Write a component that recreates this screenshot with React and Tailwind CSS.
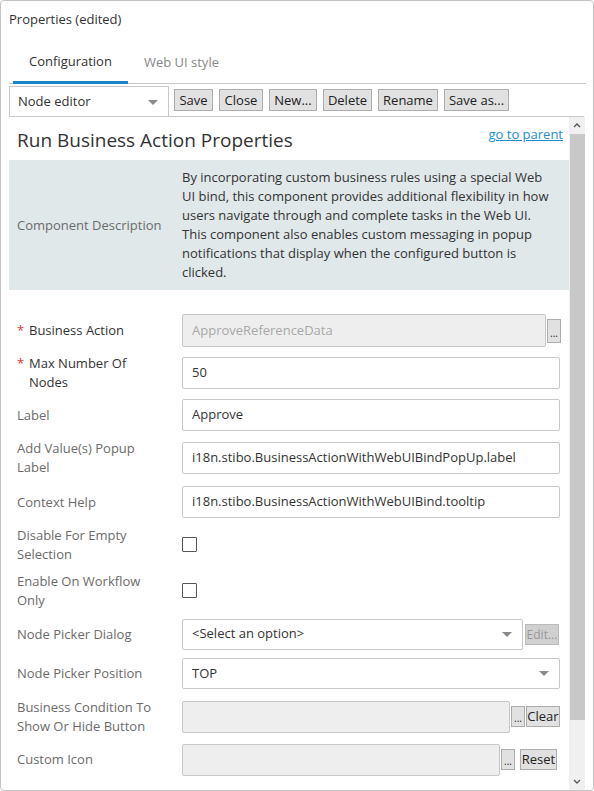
import React from "react";

const Btn = ({ children, className = "" }) => (
  <button className={`h-[22px] px-[3px] bg-[#e1e1e1] border border-[#adadad] text-[13px] leading-[20px] text-[#222] whitespace-nowrap ${className}`}>{children}</button>
);

const Small = ({ className = "" }) => (
  <div className={`w-[14px] h-[21px] bg-[#e1e1e1] border border-[#adadad] text-[10px] leading-[22px] text-center text-[#222] ${className}`}>...</div>
);

const Arrow = () => (
  <svg width="10" height="5" viewBox="0 0 10 5" className="shrink-0"><path d="M0 0 L10 0 L5 5 Z" fill="#8a8a8a" /></svg>
);

const Label = ({ children, req, dark, nowrap }) => (
  <div className={`w-[173px] shrink-0 pl-[8px] flex text-[13px] leading-[19px] ${nowrap ? "pr-[4px] whitespace-nowrap" : "pr-[22px]"} ${dark ? "text-[#333]" : "text-[#6b6b6b]"}`}>
    {req && <span className="text-[#d33] w-[12px] shrink-0">*</span>}
    <span>{children}</span>
  </div>
);

const Input = ({ value, disabled, className = "w-[378px]" }) => (
  <div className={`h-[32px] border border-[#c8c8c8] rounded-[2px] flex items-center px-[9px] text-[13px] ${disabled ? "bg-[#eeeeee] text-[#a8a8a8]" : "bg-white text-[#333]"} ${className}`}>{value}</div>
);

const Check = () => <div className="w-[15px] h-[15px] border-[1.5px] border-[#555] rounded-[1px] bg-white" />;

export default function App() {
  return (
    <div className="w-[594px] h-[791px] border border-[#c4c4c4] rounded-[4px] bg-white overflow-hidden flex flex-col font-['Open_Sans',sans-serif] text-[#333]">
      <div className="h-[39px] pl-[8px] pt-[9px] text-[13px] leading-[19px]">Properties (edited)</div>
      <div className="ml-[8px] mr-[7px] flex border-b border-[#c8c8c8] h-[44px] items-stretch">
        <div className="ml-[4px] px-[16px] flex items-center text-[13px] text-[#333] border-b-[3px] border-[#1a86c8] -mb-[1px] pt-[3px]">Configuration</div>
        <div className="px-[16px] flex items-center text-[13px] text-[#888] pt-[3px]">Web UI style</div>
      </div>
      <div className="ml-[8px] mr-[9px] mt-[2px] h-[31px] border-b border-[#c8c8c8] flex items-start">
        <div className="w-[160px] h-[31px] border border-[#c8c8c8] border-b-0 flex items-center justify-between pl-[8px] pr-[10px] text-[13px] text-[#333]">
          <span>Node editor</span>
          <Arrow />
        </div>
        <div className="flex gap-[6px] ml-[5px] mt-[3px]">
          <Btn className="w-[39px]">Save</Btn>
          <Btn className="w-[44px]">Close</Btn>
          <Btn className="w-[48px]">New...</Btn>
          <Btn className="w-[49px]">Delete</Btn>
          <Btn className="w-[60px]">Rename</Btn>
          <Btn className="w-[65px]">Save as...</Btn>
        </div>
      </div>
      <div className="flex flex-1 min-h-0 ml-[8px] mr-[8px]">
        <div className="flex-1 min-w-0 flex flex-col">
          <div className="h-[43px] flex items-center justify-between pl-[8px] pr-[6px]">
            <span className="text-[19px] text-[#333] mt-[3px]">Run Business Action Properties</span>
            <span className="text-[13px] text-[#1a8fd0] underline -mt-[8px]">go to parent</span>
          </div>
          <div className="h-[130px] bg-[#e0e8ea] flex items-center">
            <Label nowrap>Component Description</Label>
            <div className="text-[13px] leading-[19px] text-[#333] whitespace-nowrap">
              <div>By incorporating custom business rules using a special Web</div>
              <div>UI bind, this component provides additional flexibility in how</div>
              <div>users navigate through and complete tasks in the Web UI.</div>
              <div>This component also enables custom messaging in popup</div>
              <div>notifications that display when the configured button is</div>
              <div>clicked.</div>
            </div>
          </div>
          <div className="mt-[19px] flex flex-col">
            <div className="h-[43px] flex items-center">
              <Label req dark>Business Action</Label>
              <Input value="ApproveReferenceData" disabled className="w-[364px] h-[33px]" />
              <Small className="!h-[24px] !leading-[26px] ml-[1px]" />
            </div>
            <div className="h-[42px] flex items-center">
              <Label req dark>Max Number Of Nodes</Label>
              <Input value="50" />
            </div>
            <div className="h-[42px] flex items-center">
              <Label>Label</Label>
              <Input value="Approve" />
            </div>
            <div className="h-[44px] flex items-center">
              <Label>Add Value(s) Popup Label</Label>
              <Input value="i18n.stibo.BusinessActionWithWebUIBindPopUp.label" />
            </div>
            <div className="h-[44px] flex items-center">
              <Label>Context Help</Label>
              <Input value="i18n.stibo.BusinessActionWithWebUIBind.tooltip" />
            </div>
            <div className="h-[41px] flex items-center">
              <Label>Disable For Empty Selection</Label>
              <Check />
            </div>
            <div className="h-[51px] flex items-center">
              <Label>Enable On Workflow Only</Label>
              <Check />
            </div>
            <div className="h-[36px] flex items-center">
              <Label>Node Picker Dialog</Label>
              <div className="w-[341px] h-[31px] border border-[#c8c8c8] rounded-[2px] flex items-center justify-between pl-[9px] pr-[10px] text-[13px] text-[#333]">
                <span>&lt;Select an option&gt;</span>
                <Arrow />
              </div>
              <div className="ml-[2px] w-[34px] h-[21px] bg-[#d0d0d0] border border-[#bbb] text-[12px] leading-[19px] text-center text-[#999]">Edit...</div>
            </div>
            <div className="h-[43px] flex items-center">
              <Label>Node Picker Position</Label>
              <div className="w-[378px] h-[31px] border border-[#c8c8c8] rounded-[2px] flex items-center justify-between pl-[9px] pr-[10px] text-[13px] text-[#333]">
                <span>TOP</span>
                <Arrow />
              </div>
            </div>
            <div className="h-[43px] flex items-center">
              <Label>Business Condition To Show Or Hide Button</Label>
              <Input disabled className="w-[328px] h-[31px]" />
              <Small className="ml-[1px]" />
              <Btn className="!h-[21px] !px-0 w-[34px] text-[12.5px] !leading-[19px] ml-[1px]">Clear</Btn>
            </div>
            <div className="h-[43px] flex items-center">
              <Label>Custom Icon</Label>
              <Input disabled className="w-[318px] h-[31px]" />
              <Small className="ml-[1px]" />
              <Btn className="!h-[21px] !px-0 w-[37px] text-[12.5px] !leading-[19px] ml-[5px]">Reset</Btn>
            </div>
          </div>
        </div>
        <div className="w-[16px] shrink-0 bg-[#f0f0f0] flex flex-col items-center">
          <div className="h-[17px] flex items-center justify-center">
            <svg width="8" height="5" viewBox="0 0 8 5"><path d="M1 4 L4 1 L7 4" stroke="#555" strokeWidth="1.3" fill="none" /></svg>
          </div>
          <div className="w-[15px] h-[586px] bg-[#c8c8c8]" />
          <div className="flex-1" />
          <div className="h-[17px] flex items-center justify-center">
            <svg width="8" height="5" viewBox="0 0 8 5"><path d="M1 1 L4 4 L7 1" stroke="#555" strokeWidth="1.3" fill="none" /></svg>
          </div>
        </div>
      </div>
    </div>
  );
}
